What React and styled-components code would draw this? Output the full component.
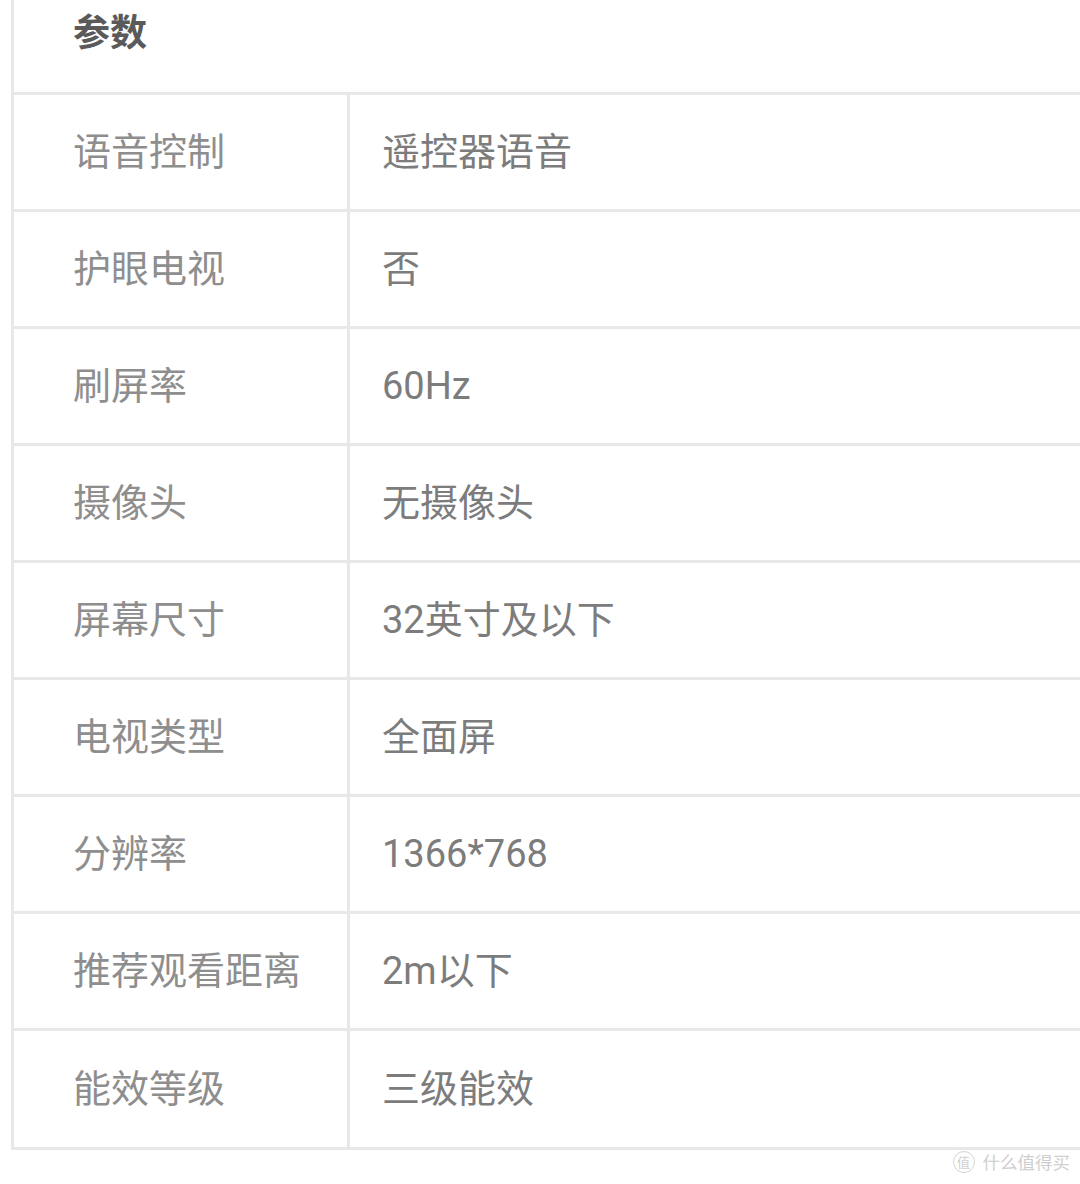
import React from "react";
import styled, { createGlobalStyle } from "styled-components";

const Global = createGlobalStyle`
  html, body { margin: 0; padding: 0; background: #fff; }
  body { width: 1080px; height: 1184px; overflow: hidden; position: relative;
    font-family: "Roboto", "Noto Sans CJK SC", sans-serif; }
`;

const Page = styled.div`
  padding-left: 11px;
  width: 1069px;
  overflow: hidden;
`;

const Table = styled.div`
  display: flex;
  flex-direction: column;
  border-left: 3px solid #e8e8e8;
  border-bottom: 3px solid #e8e8e8;
`;

const HeadRow = styled.div`
  height: 95px;
  box-sizing: border-box;
  padding: 12px 0 0 59px;
  border-bottom: 3px solid #e8e8e8;
  font-size: 37px;
  font-weight: 700;
  color: #5a5a5a;
  line-height: 44px;
`;

const Row = styled.div`
  display: flex;
  height: ${(p) => (p.$last ? "116px" : "114px")};
  border-top: ${(p) => (p.$first ? "none" : "3px solid #e8e8e8")};
`;

const Cell = styled.div`
  display: flex;
  align-items: center;
  box-sizing: border-box;
  font-size: 38px;
  line-height: 44px;
`;

const Label = styled(Cell)`
  flex: 0 0 336px;
  padding-left: 59px;
  border-right: 3px solid #e8e8e8;
  color: #8e8e8e;
`;

const Value = styled(Cell)`
  flex: 1;
  padding-left: 32px;
  color: #7c7c7c;
`;

const Watermark = styled.div`
  position: absolute;
  right: 10px;
  top: 1149px;
  display: flex;
  align-items: center;
  gap: 8px;
  color: #cfcfcf;
  font-size: 17.5px;
  font-family: "Noto Sans CJK SC", sans-serif;
`;

const Badge = styled.span`
  display: inline-flex;
  align-items: center;
  justify-content: center;
  width: 20px;
  height: 20px;
  border: 1.5px solid #d4d4d4;
  border-radius: 50%;
  font-size: 13px;
  color: #cfcfcf;
`;

const rows = [
  ["语音控制", "遥控器语音"],
  ["护眼电视", "否"],
  ["刷屏率", "60Hz"],
  ["摄像头", "无摄像头"],
  ["屏幕尺寸", "32英寸及以下"],
  ["电视类型", "全面屏"],
  ["分辨率", "1366*768"],
  ["推荐观看距离", "2m以下"],
  ["能效等级", "三级能效"],
];

export default function App() {
  return (
    <>
      <Global />
      <Page>
        <Table>
          <HeadRow>参数</HeadRow>
          {rows.map(([k, v], i) => (
            <Row key={k} $first={i === 0} $last={i === rows.length - 1}>
              <Label>{k}</Label>
              <Value>{v}</Value>
            </Row>
          ))}
        </Table>
      </Page>
      <Watermark>
        <Badge>值</Badge>
        <span>什么值得买</span>
      </Watermark>
    </>
  );
}
